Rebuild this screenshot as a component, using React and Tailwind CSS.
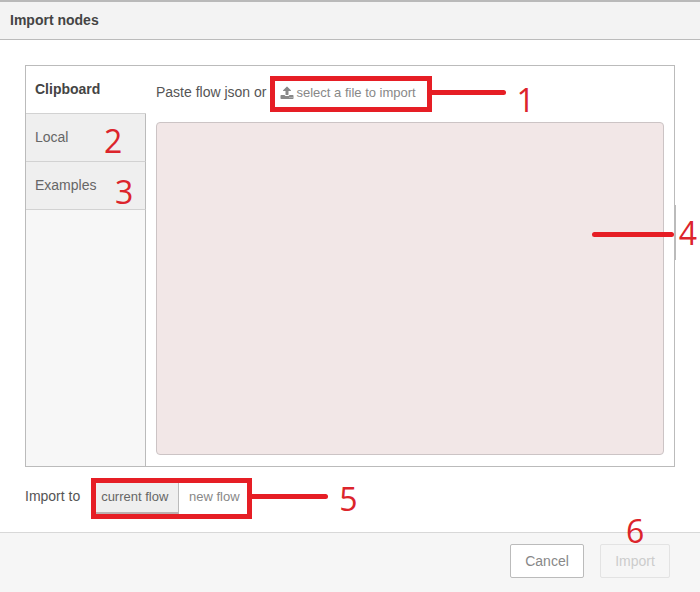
import { useState } from 'react';
import { clsx } from 'clsx';

const tabs = [
  { id: 'clipboard', label: 'Clipboard' },
  { id: 'local', label: 'Local', mark: '2', markPos: 'left-[78px] top-[11px]' },
  { id: 'examples', label: 'Examples', mark: '3', markPos: 'left-[89px] top-[14px]' },
];

const UploadIcon = () => (
  <svg viewBox="0 0 1792 1792" className="w-[14px] h-[14px] shrink-0" fill="currentColor" aria-hidden="true">
    <path d="M1344 1472q0-26-19-45t-45-19-45 19-19 45 19 45 45 19 45-19 19-45zm256 0q0-26-19-45t-45-19-45 19-19 45 19 45 45 19 45-19 19-45zm128-224v320q0 40-28 68t-68 28h-1472q-40 0-68-28t-28-68v-320q0-40 28-68t68-28h427q21 56 70.5 92t110.5 36h256q61 0 110.5-36t70.5-92h427q40 0 68 28t28 68zm-325-648q-17 40-59 40h-256v448q0 26-19 45t-45 19h-256q-26 0-45-19t-19-45v-448h-256q-42 0-59-40-17-39 14-69l448-448q18-19 45-19t45 19l448 448q31 30 14 69z" />
  </svg>
);

// Red callout number
const Mark = ({ children, className }) => (
  <span
    className={clsx(
      "absolute z-10 pointer-events-none font-['Open_Sans',sans-serif] font-normal text-[32px] leading-8 text-[#dc242b]",
      className
    )}
  >
    {children}
  </span>
);

// Red callout line
const Pointer = ({ className }) => (
  <span className={clsx('absolute z-10 pointer-events-none h-[5px] rounded-full bg-[#e61e25]', className)} />
);

const App = () => {
  const [tab, setTab] = useState('clipboard');
  const [target, setTarget] = useState('current');
  const [json, setJson] = useState('');

  return (
    <div className="min-h-screen flex flex-col bg-white font-['Liberation_Sans',Arial,sans-serif] text-sm leading-5 text-[#555]">
      <header className="h-10 shrink-0 flex items-center px-[10px] pb-[2px] border-t-2 border-t-[#b9b9b9] border-b border-b-[#bbb] bg-[#f3f3f3]">
        <h1 className="font-bold text-[#444]">Import nodes</h1>
      </header>

      <main className="flex-1 flex flex-col px-[25px] pt-[25px] pb-[13px]">
        <section className="relative flex-1 flex border border-[#bbb]">
          <nav className="w-[120px] shrink-0 flex flex-col">
            {tabs.map(({ id, label, mark, markPos }) => (
              <button
                key={id}
                type="button"
                onClick={() => setTab(id)}
                className={clsx(
                  'relative h-12 shrink-0 px-[9px] pb-[2px] text-left border-b border-b-[#d2d2d2]',
                  tab === id ? 'bg-white font-bold text-[#444]' : 'bg-[#efefef] text-[#666] border-r border-r-[#bbb]'
                )}
              >
                {label}
                {mark && <Mark className={markPos}>{mark}</Mark>}
              </button>
            ))}
            <div className="flex-1 bg-[#f7f7f7] border-r border-r-[#bbb]" />
          </nav>

          <div className="flex-1 flex flex-col gap-[10px] px-[10px] pt-[10px] pb-[11px]">
            <div className="flex items-center gap-[3px] h-9">
              <label htmlFor="flow-json" className="pb-1">Paste flow json or</label>
              <div className="relative border-[5px] border-[#e61e25]">
                <button type="button" className="flex items-center gap-[3px] h-[26px] w-[152px] px-[5px] pb-[2px] text-[13px] text-[#888] whitespace-nowrap">
                  <UploadIcon />
                  select a file to import
                </button>
                <Pointer className="left-full top-[9px] w-[79px]" />
                <Mark className="left-[242px] top-[3px]">1</Mark>
              </div>
            </div>
            <textarea
              id="flow-json"
              value={json}
              onChange={(e) => setJson(e.target.value)}
              className="flex-1 w-full resize-none rounded border border-[#ccc4c5] bg-[#f2e7e7] p-2 outline-none"
            />
          </div>

          <div className="absolute -right-[2px] top-[139px] w-[2px] h-[55px] bg-[#bbb]" />
          <Pointer className="right-0 top-[166px] w-[82px]" />
          <Mark className="-right-[23px] top-[151px]">4</Mark>
        </section>

        <div className="flex items-center pt-[11px]">
          <span id="import-to" className="pb-[6px]">Import to</span>
          <div role="group" aria-labelledby="import-to" className="relative ml-[11px] flex border-[5px] border-[#e61e25] text-[13px]">
            <button
              type="button"
              onClick={() => setTarget('current')}
              className={clsx(
                'h-[31px] w-[83px] pr-[5px] pb-[2px] border-r border-r-[#bbb] border-b-2 whitespace-nowrap',
                target === 'current' ? 'bg-[#efefef] text-[#666] border-b-[#bbb0b0]' : 'text-[#888] border-b-transparent'
              )}
            >
              current flow
            </button>
            <button
              type="button"
              onClick={() => setTarget('new')}
              className={clsx(
                'h-[31px] w-[68px] pl-[2px] pb-[2px] border-b-2 whitespace-nowrap',
                target === 'new' ? 'bg-[#efefef] text-[#666] border-b-[#bbb0b0]' : 'text-[#888] border-b-transparent'
              )}
            >
              new flow
            </button>
            <Pointer className="left-full top-[11px] w-[81px]" />
            <Mark className="left-[243px] top-0">5</Mark>
          </div>
        </div>
      </main>

      <footer className="h-[60px] shrink-0 flex items-center justify-end gap-4 px-[30px] pb-1 border-t border-t-[#d8d8d8] bg-[#f6f6f6]">
        <button type="button" className="h-[34px] w-[74px] rounded-xs border border-[#bbb] bg-white text-[#888]">
          Cancel
        </button>
        <div className="relative">
          <button type="button" disabled className="h-[34px] w-[70px] rounded-xs border border-[#e3e3e3] bg-[#f6f6f6] text-[#ccc]">
            Import
          </button>
          <Mark className="left-[26px] -top-[29px]">6</Mark>
        </div>
      </footer>
    </div>
  );
};

export default App;
